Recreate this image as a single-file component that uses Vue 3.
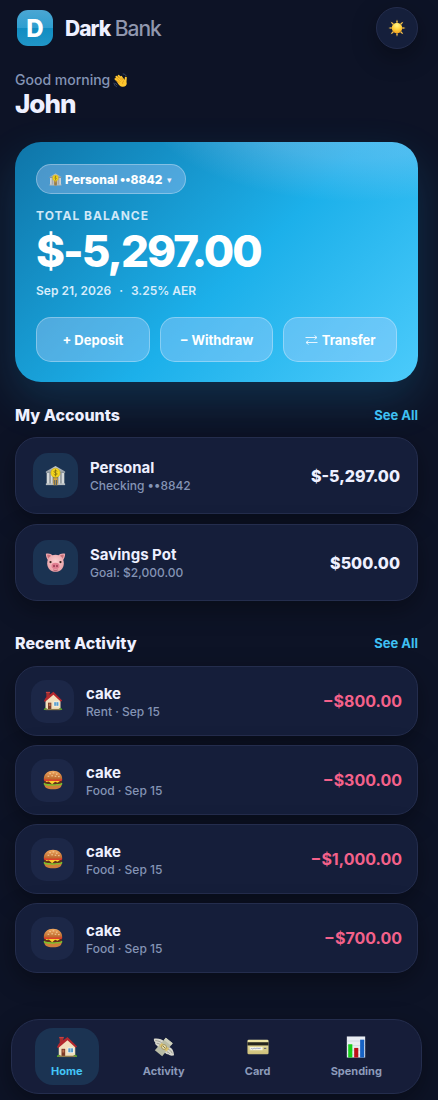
<script setup>
import { ref } from 'vue'

const accounts = [
  { id: 1, icon: 'bank', name: 'Personal', sub: 'Checking ••8842', balance: '$-5,297.00' },
  { id: 2, icon: 'pig', name: 'Savings Pot', sub: 'Goal: $2,000.00', balance: '$500.00' },
]

const activity = [
  { id: 1, icon: 'house', name: 'cake', sub: 'Rent · Sep 15', amount: '−$800.00' },
  { id: 2, icon: 'burger', name: 'cake', sub: 'Food · Sep 15', amount: '−$300.00' },
  { id: 3, icon: 'burger', name: 'cake', sub: 'Food · Sep 15', amount: '−$1,000.00' },
  { id: 4, icon: 'burger', name: 'cake', sub: 'Food · Sep 15', amount: '−$700.00' },
]

const tabs = [
  { key: 'home', icon: 'house', label: 'Home' },
  { key: 'activity', icon: 'money', label: 'Activity' },
  { key: 'card', icon: 'card', label: 'Card' },
  { key: 'spending', icon: 'chart', label: 'Spending' },
]

const selected = ref('8842')
const tab = ref('home')
</script>

<template>
  <!-- icon sprite -->
  <svg class="sprite" aria-hidden="true">
    <defs>
      <radialGradient id="g-sun" cx="50%" cy="25%" r="80%">
        <stop offset="0" stop-color="#fff58a" /><stop offset=".5" stop-color="#ffd23c" /><stop offset="1" stop-color="#f39a1c" />
      </radialGradient>
      <linearGradient id="g-bun" x1="0" y1="0" x2="0" y2="1">
        <stop offset="0" stop-color="#f0a860" /><stop offset="1" stop-color="#b9642a" />
      </linearGradient>
      <linearGradient id="g-stone" x1="0" y1="0" x2="0" y2="1">
        <stop offset="0" stop-color="#c9cdd0" /><stop offset="1" stop-color="#8d979f" />
      </linearGradient>
      <linearGradient id="g-card" x1="0" y1="0" x2="0" y2="1">
        <stop offset="0" stop-color="#efe7a8" /><stop offset="1" stop-color="#cdbf79" />
      </linearGradient>
      <radialGradient id="g-pig" cx="50%" cy="40%" r="65%">
        <stop offset="0" stop-color="#fbd0d0" /><stop offset="1" stop-color="#e89da4" />
      </radialGradient>
    </defs>

    <symbol id="i-sun" viewBox="0 0 24 24">
      <g fill="#f7c04a">
        <path d="M10.600 4.800h2.800L12 .5zM10.600 19.200h2.800L12 23.500zM4.800 10.600v2.800L.5 12zM19.200 10.600v2.800L23.500 12z" />
        <path d="M5.800 7.800 7.800 5.800 3.600 3.600zM16.200 5.800 18.200 7.800l2.200-4.200zM5.800 16.200 7.800 18.200l-4.200 2.200zM16.200 18.200 18.200 16.200l2.200 4.200z" />
      </g>
      <circle cx="12" cy="12" r="7" fill="url(#g-sun)" />
    </symbol>

    <symbol id="i-wave" viewBox="0 0 24 24">
      <g fill="none" stroke="#ffc72f" stroke-width="3.200" stroke-linecap="round">
        <path d="m11 16-7-6.500M12 14 5.500 6M14 12 9 4.500M17 12l-4-6" />
        <path d="m20 14 .5-6.500" />
      </g>
      <path d="m6 13 6-5 5 1 3 3 2 4c.5 4-3.500 7-7.500 6C11 21 8 18 6 13z" fill="#ffc72f" />
      <path d="m5.500 7.500 6.500 6.800M8.500 5.500l5.500 6.500M4.500 11.500l6 4.500M13.500 7.500l3 4M17.500 12.500c-2 1.300-2.500 3-1.800 5" stroke="#c97f14" stroke-width=".9" fill="none" />
      <path d="M1.500 15.500c.5 3.500 2 5.500 4.500 6.500M4 16c.5 1.500 1.500 2.800 3 3.500M15.500 1.500c2.500 0 4.500 1 5.500 3" stroke="#5a6c8c" stroke-width="1" fill="none" />
    </symbol>

    <symbol id="i-bank" viewBox="0 0 24 24">
      <path d="M1 7.500 12 1l11 6.500V9H1z" fill="url(#g-stone)" />
      <path d="M2 9h20v13H2z" fill="#5f6870" />
      <path d="M2 9h3.200v13H2zM6.300 9h2.500v13H6.300zM15.200 9h2.500v13h-2.500zM18.800 9H22v13h-3.200z" fill="#d5d9da" />
      <path d="M1 21h22v2H1z" fill="#b7bdc0" />
      <path d="M9.500 15h5v8h-5z" fill="#d7a23b" />
      <path d="M10.500 17h1.200v6h-1.200zM12.500 17h1.200v6h-1.200z" fill="#57636c" />
      <circle cx="12" cy="9" r="5.300" fill="#f4d61e" stroke="#c9a512" stroke-width=".6" />
      <path d="M14 7.200c-.5-.8-3.600-1.200-3.700.4 0 1.700 3.700.9 3.600 2.700-.1 1.500-3.300 1.500-4-.1M12 5v8" fill="none" stroke="#7d6a12" stroke-width=".9" />
    </symbol>

    <symbol id="i-pig" viewBox="0 0 24 24">
      <path d="M1 2c3-1 6 0 8 2L4 10C2 8 1 5 1 2zM23 2c-3-1-6 0-8 2l5 6c2-2 3-5 3-8z" fill="#eda5ab" />
      <path d="M2.500 3.300c2-.3 3.500.3 4.500 1.200L4.500 8C3.300 6.600 2.700 5 2.500 3.300zM21.500 3.300c-2-.3-3.500.3-4.500 1.200L19.500 8c1.200-1.400 1.800-3 2-4.700z" fill="#c9727c" />
      <path d="M12 3c6 0 9.500 4 9.500 10 0 5.500-4 9.500-9.500 9.500S2.500 18.500 2.500 13C2.500 7 6 3 12 3z" fill="url(#g-pig)" />
      <ellipse cx="12" cy="16" rx="4.600" ry="3.600" fill="#e37f92" />
      <ellipse cx="10.300" cy="16" rx="1" ry="1.500" fill="#963d51" />
      <ellipse cx="13.700" cy="16" rx="1" ry="1.500" fill="#963d51" />
      <circle cx="6.300" cy="11.500" r="1.300" fill="#38231f" />
      <circle cx="17.700" cy="11.500" r="1.300" fill="#38231f" />
      <path d="M9.500 20.500c1.600.8 3.400.8 5 0" stroke="#a8495b" fill="none" />
    </symbol>

    <symbol id="i-house" viewBox="0 0 24 24">
      <path d="M4 1.500h4V9H4z" fill="#a52d2e" />
      <path d="M3.500 1h5v1.500h-5z" fill="#c8403e" />
      <path d="M3 11.500 12.500 3l8.500 8.500V22H3z" fill="#f2dfbd" />
      <path d="m1 12.200 2-3.800L12.500 1 23 11.500l-1.500 1.300-9-8.300L2.500 13z" fill="#b5272d" />
      <path d="M6 14h4v8H6z" fill="#7d3b28" />
      <path d="M7 15h2v3H7z" fill="#b86e4d" />
      <path d="M12.800 12.800h6.400v5.600h-6.400z" fill="#fff" />
      <path d="M13.400 13.400h5.200v4.400h-5.200z" fill="#579cc9" />
      <path d="M16 13v5" stroke="#c9e0ec" stroke-width=".7" />
      <path d="M1 22.800c0-2.200 2-3 4-1.600v1.600zM23 22.800c0-2.200-2-3-4-1.600v1.600z" fill="#55a32f" />
      <path d="M3 21.500h18V23H3z" fill="#8d7a4c" />
    </symbol>

    <symbol id="i-burger" viewBox="0 0 24 24">
      <path d="M1.500 17h21c0 3.800-3 6-10.500 6S1.500 20.800 1.500 17z" fill="#cf7f3a" />
      <path d="M1 15.500c2-1.500 20-1.500 22 0 .8 1.800-.8 3-3 2.500-2 1.500-4-.5-6 .7-2 1.200-4-1-6 .2-2 .6-3.500-.8-5-.7-1.700 0-2.600-1.200-2-2.700z" fill="#7fc02e" />
      <path d="M1.300 12.500h21.400v2.200c0 1.500-4 2.300-10.700 2.300S1.300 16.200 1.300 14.700z" fill="#632f1b" />
      <path d="M2 12h20l-4.500 3.200-3-1.200-3.500 3-4-3.300L4 14.500z" fill="#ffcf30" />
      <path d="M1 10.500h22V12c0 .8-1 1.200-3 1.200H4c-2 0-3-.4-3-1.200z" fill="#e0402d" />
      <path d="M1 10.500C1 5 5.500 1 12 1s11 4 11 9.500c0 1.400-22 1.400-22 0z" fill="url(#g-bun)" />
      <path d="M8 4.500h1M12 3.500h1M16 5h1M10.500 7h1M14.500 7.500h1M6 7.500h1M18.500 8h1" stroke="#fbe0ae" stroke-linecap="round" />
    </symbol>

    <symbol id="i-money" viewBox="0 0 24 24">
      <path d="M1 3c4-.5 9 0 11.500 3.500L8 13c-2-.5-3-1.500-3.500-2.500C2.500 9.500 2 8 2.500 7 1.200 6 .8 4.500 1 3z" fill="#d9d8cd" />
      <path d="M23 21c-.5-5-2-8-5.500-9l-5 5.500c1 1.800 2.500 2.500 4 2.500 1.500 1.500 4.500 1.800 6.500 1z" fill="#d9d8cd" />
      <path d="M2.500 5c3 .2 5.500 1 7.500 3M4 8c2 0 3.500.8 4.500 2M21 19c-1-2.500-2.500-3.800-4.500-4.500M18.500 19.500c-.8-1.300-2-2-3.500-2.300" stroke="#97978e" fill="none" />
      <path d="m14 2 7.500 6L10 22l-8-6.500z" fill="#b9bca6" />
      <path d="m14 2 7.500 6-2 2.400-7.500-6z" fill="#cfd0bd" />
      <path d="m9.500 7.500 8 6-2.700 3.300-8-6z" fill="#dcc16b" />
      <circle cx="12" cy="12" r="2.600" fill="#eee4ae" stroke="#8c7b45" stroke-width=".8" />
      <path d="m11 11 2 2" stroke="#6e6036" />
    </symbol>

    <symbol id="i-card" viewBox="0 0 24 24">
      <rect x=".5" y="4" width="23" height="16" rx="1.500" fill="url(#g-card)" />
      <path d="M.5 6.800h23v3.500H.5z" fill="#25251e" />
      <path d="M3 12h14v3.500H3z" fill="#f7f5e4" />
      <path d="M4 14.200c1.200-1.500 2 .8 3-.4s2 .6 3-.2 2 .5 5-.3" fill="none" stroke="#7d8bc2" stroke-width=".8" />
      <path d="M18.500 13.500H21" stroke="#4d5276" />
    </symbol>

    <symbol id="i-chart" viewBox="0 0 24 24">
      <path d="M2 .5h20v23H2z" fill="#e9edf3" />
      <path d="M2 5.500h20M2 10.500h20M2 15.500h20M2 20.500h20" stroke="#c3cbd8" stroke-width=".6" />
      <path d="M3.500 9h4.500v14.500H3.500z" fill="#16cf1b" />
      <path d="M10 13h4.500v10.500H10z" fill="#bb1118" />
      <path d="M16.500 4H21v19.500h-4.500z" fill="#1762c4" />
    </symbol>
  </svg>

  <main class="app">
    <header class="topbar">
      <div class="brand">
        <span class="logo">D</span>
        <span class="brand-name"><b>Dark</b> Bank</span>
      </div>
      <button class="theme-btn" aria-label="Toggle theme">
        <svg class="ico-sun"><use href="#i-sun" /></svg>
      </button>
    </header>

    <section class="greeting">
      <p>Good morning <svg class="ico-wave"><use href="#i-wave" /></svg></p>
      <h1>John</h1>
    </section>

    <section class="balance-card">
      <label class="account-pill">
        <svg class="ico-pill"><use href="#i-bank" /></svg>
        <select v-model="selected" aria-label="Account">
          <option value="8842">Personal ••8842</option>
        </select>
        <span class="caret">▾</span>
      </label>
      <p class="balance-label">TOTAL BALANCE</p>
      <p class="balance">$-5,297.00</p>
      <p class="balance-meta"><span>Sep 21, 2026</span><span>·</span><span>3.25% AER</span></p>
      <div class="actions">
        <button>+ Deposit</button>
        <button>− Withdraw</button>
        <button>
          <svg class="ico-swap" viewBox="0 0 12 10">
            <path d="M0 2.500h11.500M9 .5l2.500 2L9 4.500M12 7.500H.5M3 5.500l-2.500 2 2.500 2" />
          </svg>
          Transfer
        </button>
      </div>
    </section>

    <section class="accounts">
      <div class="section-head">
        <h2>My Accounts</h2>
        <a href="#accounts">See All</a>
      </div>
      <ul class="list">
        <li v-for="a in accounts" :key="a.id" class="row">
          <span class="tile"><svg><use :href="'#i-' + a.icon" /></svg></span>
          <div class="info">
            <strong>{{ a.name }}</strong>
            <span>{{ a.sub }}</span>
          </div>
          <span class="amount">{{ a.balance }}</span>
        </li>
      </ul>
    </section>

    <section class="activity">
      <div class="section-head">
        <h2>Recent Activity</h2>
        <a href="#activity">See All</a>
      </div>
      <ul class="list">
        <li v-for="t in activity" :key="t.id" class="row">
          <span class="tile"><svg><use :href="'#i-' + t.icon" /></svg></span>
          <div class="info">
            <strong>{{ t.name }}</strong>
            <span>{{ t.sub }}</span>
          </div>
          <span class="amount">{{ t.amount }}</span>
        </li>
      </ul>
    </section>

    <nav class="tabbar">
      <a v-for="t in tabs" :key="t.key" :href="'#' + t.key" :class="{ active: tab === t.key }" @click="tab = t.key">
        <svg><use :href="'#i-' + t.icon" /></svg>
        <span>{{ t.label }}</span>
      </a>
    </nav>
  </main>
</template>

<style>
body { background: #0d1326; }
</style>

<style scoped>
.sprite { position: absolute; width: 0; height: 0; }
.app {
  box-sizing: border-box; padding: 7px 20px 6px 15px;
  font-family: Inter, 'Liberation Sans', sans-serif; color: #eef0ff;
  background: #0d1326; overflow: hidden;
}
p, h1, h2, ul { margin: 0; padding: 0; }
button, select { font-family: inherit; cursor: pointer; }
a { text-decoration: none; }
svg { flex-shrink: 0; }

/* ---- header ---- */
.topbar { display: flex; align-items: center; justify-content: space-between; height: 42px; }
.brand { display: flex; align-items: center; gap: 12px; padding-left: 2px; }
.logo {
  display: grid; place-items: center; width: 36px; height: 36px; border-radius: 11px;
  background: linear-gradient(180deg, #4ba6d3, #2f9fd0 50%, #118dc2 51%, #2196c8);
  color: #fff; font-size: 24px; font-weight: 800;
}
.brand-name { font-size: 21px; font-weight: 500; letter-spacing: -1px; color: #9097ae; }
.brand-name b { font-weight: 800; color: #eef0ff; }
.theme-btn {
  display: grid; place-items: center; width: 42px; height: 42px; padding: 0;
  border: 1px solid #242d4d; border-radius: 50%; background: #151f3b;
  box-shadow: 0 8px 24px rgba(0, 0, 0, 0.35);
}
.ico-sun { width: 18px; height: 18px; }
.greeting { padding: 21px 0 24px; }
.greeting p {
  display: flex; align-items: center; gap: 3px;
  font-size: 14px; line-height: 20px; font-weight: 500; color: #8494b5;
}
.ico-wave { width: 15px; height: 15px; }
.greeting h1 { font-size: 26px; line-height: 28px; font-weight: 800; letter-spacing: -1px; }

/* ---- balance card ---- */
.balance-card {
  padding: 22px 21px 20px; border-radius: 26px;
  background:
    radial-gradient(ellipse 55% 45% at 85% -20%, rgba(240, 225, 255, 0.34), rgba(240, 225, 255, 0.2) 60%, transparent),
    linear-gradient(135deg, #0f75a8, #1cb0ea 55%, #4ccbfb);
  box-shadow: 0 18px 44px rgba(28, 160, 220, 0.2);
}
.account-pill {
  display: inline-flex; align-items: center; box-sizing: border-box; height: 30px; padding: 0 13px 0 12px;
  border: 1px solid rgba(255, 255, 255, 0.3); border-radius: 15px; background: rgba(200, 205, 255, 0.32);
}
.ico-pill { width: 13px; height: 13px; }
.account-pill select {
  appearance: none; margin: 0 4px 0 3px; padding: 0; border: none; outline: none; background: transparent;
  color: #fff; font-size: 12px; font-weight: 800;
}
.caret { font-size: 9px; }
.balance-label {
  margin-top: 14px; font-size: 12px; line-height: 16px; font-weight: 700; letter-spacing: 1px; color: #cfe8f8;
}
.balance { font-size: 44px; line-height: 54px; font-weight: 800; letter-spacing: -2px; color: #fff; }
.balance-meta {
  display: flex; gap: 8px; margin-top: 4px;
  font-size: 12px; line-height: 18px; font-weight: 600; color: #d6ecfb;
}
.actions { display: grid; grid-template-columns: repeat(3, 1fr); gap: 10px; margin-top: 17px; }
.actions button {
  display: flex; align-items: center; justify-content: center; gap: 4px; height: 45px; padding: 0;
  border: 1px solid rgba(255, 255, 255, 0.3); border-radius: 15px; background: rgba(200, 210, 255, 0.32);
  color: #fff; font-size: 13px; font-weight: 700;
}
.ico-swap { width: 13px; height: 10px; fill: none; stroke: #e4f4ff; stroke-width: 1; }

/* ---- lists ---- */
.section-head { display: flex; align-items: center; justify-content: space-between; height: 24px; }
.section-head h2 { font-size: 16px; font-weight: 800; }
.section-head a { font-size: 13px; font-weight: 700; color: #3fc0f3; }
.accounts { margin-top: 21px; }
.activity { margin-top: 30px; }
.list { display: flex; flex-direction: column; gap: 10px; margin-top: 10px; list-style: none; }
.row {
  display: flex; align-items: center; box-sizing: border-box; height: 77px; padding: 0 17px;
  border: 1px solid #242d4d; border-radius: 22px; background: #151e3a;
  box-shadow: 0 8px 24px rgba(0, 0, 0, 0.35);
}
.tile {
  display: grid; place-items: center; width: 45px; height: 45px; border-radius: 15px; background: #1b3352;
}
.tile svg { width: 21px; height: 21px; }
.info { display: flex; flex-direction: column; flex: 1; margin-left: 12px; padding-top: 2px; }
.info strong { font-size: 15px; line-height: 18px; font-weight: 700; }
.info span { font-size: 12px; line-height: 17px; font-weight: 500; color: #8494b5; }
.amount { font-size: 16px; font-weight: 800; }
.activity .list { gap: 9px; margin-top: 11px; }
.activity .row { height: 70px; padding: 0 15px; }
.activity .tile { width: 43px; height: 43px; background: #1c2747; }
.activity .tile svg { width: 20px; height: 20px; }
.activity .amount { font-weight: 700; color: #f4618a; }

/* ---- bottom tabs ---- */
.tabbar {
  display: flex; align-items: center; justify-content: space-around; box-sizing: border-box; height: 75px;
  margin: 46px -4px 0; padding: 0 9px;
  border: 1px solid #242d4d; border-radius: 28px; background: #161d39;
  box-shadow: 0 8px 24px rgba(0, 0, 0, 0.35);
}
.tabbar a {
  display: flex; flex-direction: column; align-items: center; gap: 6px; box-sizing: border-box;
  height: 57px; padding: 8px 16px; border-radius: 18px; color: #8c9aba; font-size: 11px; line-height: 15px; font-weight: 700;
}
.tabbar a.active { background: #1b3352; color: #43c5f7; }
.tabbar svg { width: 22px; height: 22px; }
</style>
